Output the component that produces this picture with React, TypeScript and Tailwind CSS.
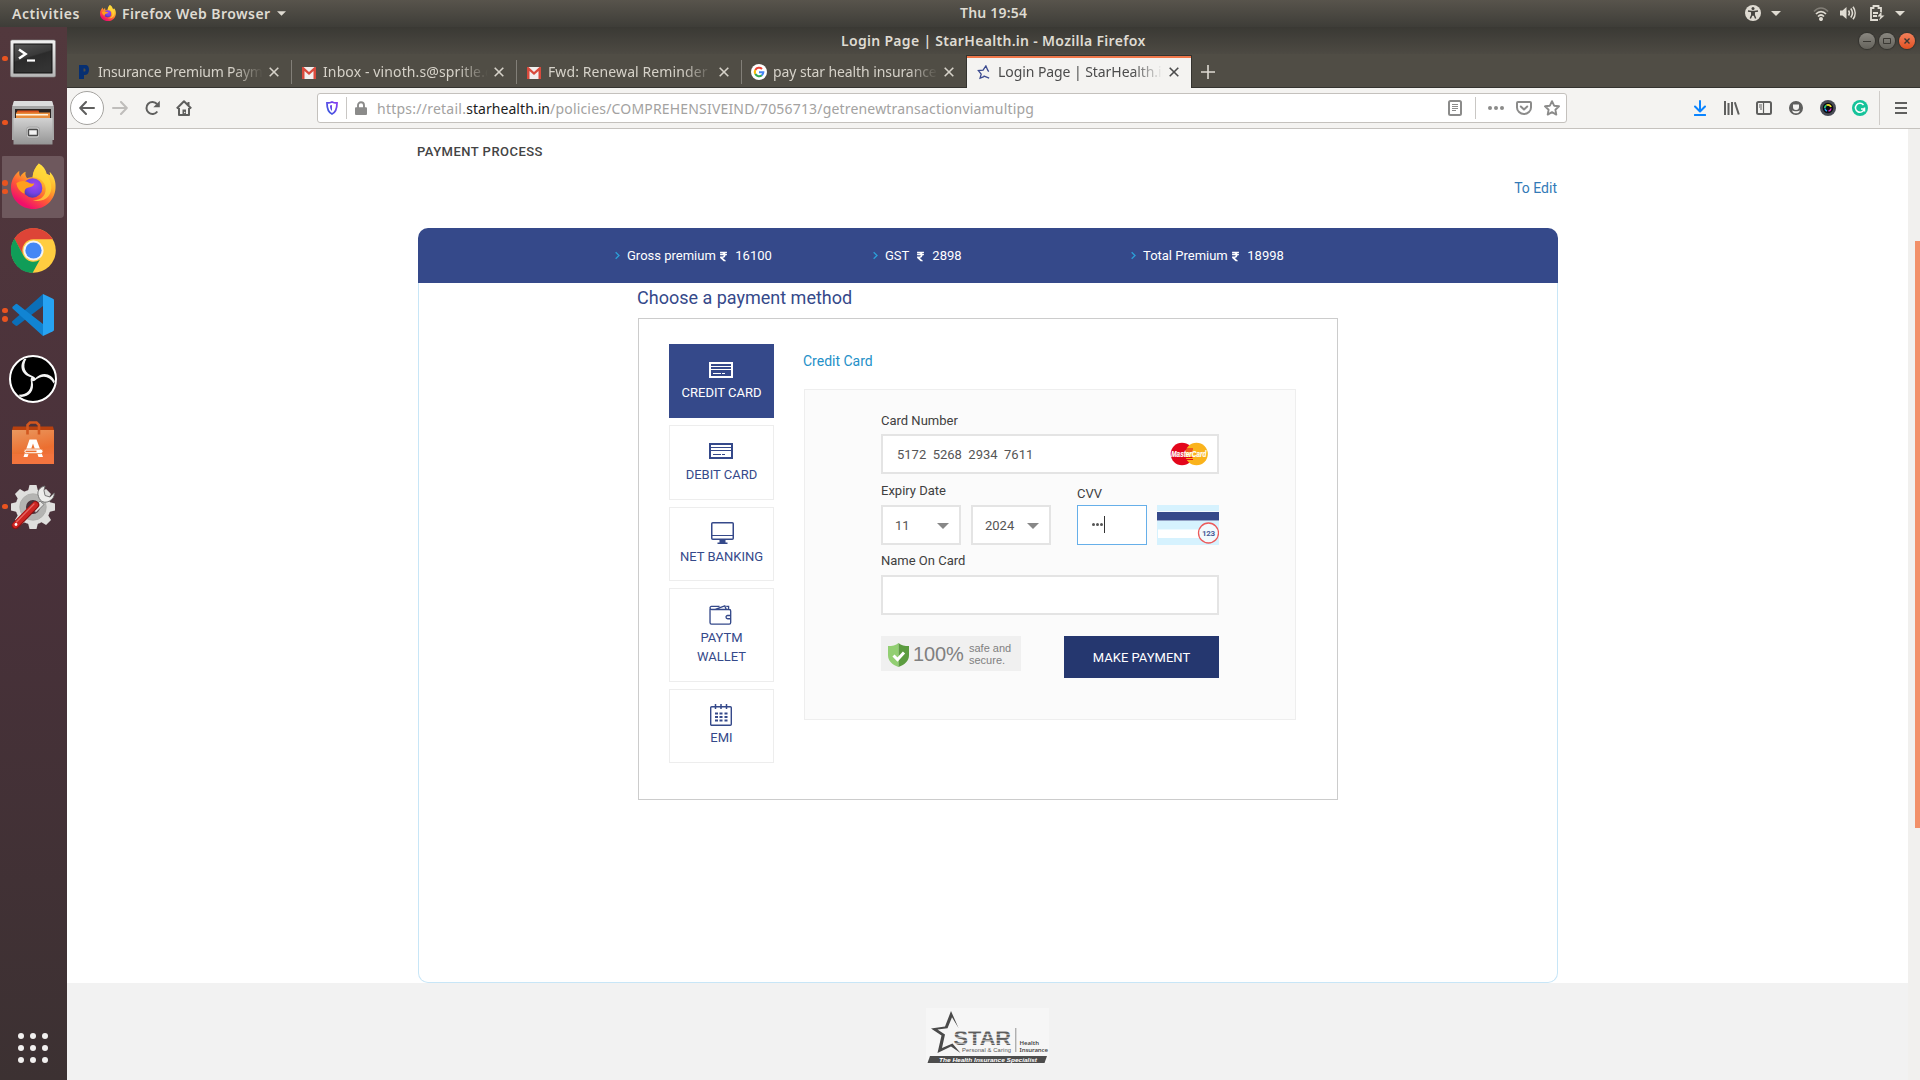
import React from "react";
import { FaRupeeSign } from "react-icons/fa";

const ubuntu = "font-['Noto_Sans',sans-serif]";

/* ---------- Logos ---------- */

function Firefox({ className }: { className: string }) {
  return (
    <svg viewBox="0 0 46 46" className={className}>
      <defs>
        <linearGradient id="ffBody" x1="0.85" y1="0.05" x2="0.25" y2="1">
          <stop offset="0" stopColor="#fff14a" />
          <stop offset="0.35" stopColor="#ffb02a" />
          <stop offset="0.62" stopColor="#ff5a36" />
          <stop offset="0.9" stopColor="#f0106a" />
        </linearGradient>
        <radialGradient id="ffGlobe" cx="0.6" cy="0.35" r="0.7">
          <stop offset="0" stopColor="#a244f0" />
          <stop offset="0.6" stopColor="#7542e5" />
          <stop offset="1" stopColor="#4a3aa8" />
        </radialGradient>
      </defs>
      <path d="M28.500 0c4.500 2.500 7 6 8 10.500l3.500 1.500-.5-3.500C44 13 46 18.500 45.500 25 45 37 35.500 46.500 23 46.500S0 37 0 24.500C0 18 3 12 8.500 7.500c-.3 2.500 0 4.500 1 6 1.200-2.500 3-4 5.500-5-.7 2.500-.2 4.500 1.500 6.500 1.800-.8 3.500-1 5.500-1 .5-6 3-10.500 6.500-14z" fill="url(#ffBody)" />
      <path d="M22 14c5 0 13 3 13.500 12C35.500 34 29 38 22 37.500c12 3.500 21-5 19-16C39.500 14 34 8.500 28.500 0 25 3.500 22.500 8 22 14z" fill="#ffd93a" opacity="0.750" />
      <circle cx="22" cy="25" r="10" fill="url(#ffGlobe)" />
      <path d="M5.500 20c4.500-3 9.500-2.700 13.500.2 1.500.6 3 .5 4.800.3-.8 3-3.800 4-6.800 4.300-2.500.4-3.500 2.700-3 6.200C9 29 6 25 5.500 20z" fill="#ff9f1c" />
    </svg>
  );
}

function Terminal() {
  return (
    <svg viewBox="0 0 46 40" className="h-[40px] w-[46px]">
      <defs>
        <linearGradient id="tmFrame" x1="0" y1="0" x2="0" y2="1">
          <stop offset="0" stopColor="#f2f2f2" />
          <stop offset="1" stopColor="#b5b5b5" />
        </linearGradient>
        <linearGradient id="tmScreen" x1="0" y1="0" x2="0.4" y2="1">
          <stop offset="0" stopColor="#555" />
          <stop offset="0.5" stopColor="#3a3a3a" />
          <stop offset="0.55" stopColor="#2b2b2b" />
          <stop offset="1" stopColor="#333" />
        </linearGradient>
      </defs>
      <rect x="0.500" y="1" width="45" height="37" rx="1.500" fill="url(#tmFrame)" stroke="#8a8a8a" strokeWidth="0.600" />
      <rect x="4" y="5" width="38" height="29" fill="url(#tmScreen)" stroke="#111" />
      <path d="M9 10.500l6.500 4.500L9 19.500" fill="none" stroke="#fff" strokeWidth="2.600" />
      <path d="M17 21.500h8" stroke="#fff" strokeWidth="2.200" />
    </svg>
  );
}

function Files() {
  return (
    <svg viewBox="0 0 42 44" className="h-[44px] w-[42px]">
      <defs>
        <linearGradient id="flFront" x1="0" y1="0" x2="0" y2="1">
          <stop offset="0" stopColor="#d2d2d2" />
          <stop offset="1" stopColor="#959595" />
        </linearGradient>
      </defs>
      <path d="M2 0h38l2 6v33H0V6z" fill="#a6a6a6" />
      <path d="M2 0h38l1.500 5H.5z" fill="#dcdcdc" />
      <rect x="3" y="8" width="36" height="10" fill="#2b2422" />
      <rect x="5" y="9.500" width="22" height="8" rx="1" fill="#d9541e" />
      <rect x="4" y="11.500" width="34" height="6" fill="#e98d3c" />
      <rect x="4" y="13" width="32" height="1.500" fill="#fff3df" />
      <path d="M1.500 17h39v26.500h-39z" fill="url(#flFront)" />
      <rect x="14.500" y="26" width="13" height="11" rx="2.500" fill="#c9c9c9" stroke="#9a9a9a" strokeWidth="0.700" />
      <rect x="16.500" y="28.500" width="9" height="6" rx="0.800" fill="#f2f2f2" stroke="#4a4a4a" strokeWidth="1.400" />
    </svg>
  );
}

function Chrome() {
  return (
    <svg viewBox="0 0 46 46" className="h-[45px] w-[45px]">
      <circle cx="23" cy="23" r="22.800" fill="#ffcd40" />
      <path d="M3.300 11A23 23 0 0 1 42.700 11.500H23a11.500 11.500 0 0 0-10.500 16z" fill="#dd4437" />
      <path d="M3.500 10.700L13 28.500A11.500 11.500 0 0 0 29.500 32.500L22 46A23 23 0 0 1 3.500 10.700z" fill="#109d58" />
      <circle cx="23" cy="23" r="10.300" fill="#f4f4f4" />
      <circle cx="23" cy="23" r="8.300" fill="#4387f5" />
    </svg>
  );
}

function VSCode() {
  return (
    <svg viewBox="0 0 42 42" className="h-[42px] w-[42px]">
      <path d="M0 27.500L31 0v12L5.500 31.500a1.500 1.500 0 0 1-2 0L.3 29z" fill="#0b6fb8" />
      <path d="M.3 13L3.500 10.300a1.500 1.500 0 0 1 2 0L31 30v12L.5 14.500z" fill="#1184d3" />
      <path d="M31 0l9.500 4.500c1 .5 1.500 1 1.500 2v29c0 1-.5 1.500-1.500 2L31 42z" fill="#27a3f2" />
    </svg>
  );
}

const BLADE = "M15 4C10.500 10 11.500 19.500 22.500 22.500l2.500-.7C15.500 18.500 13 11.500 17.500 3.800z";

function Obs() {
  return (
    <svg viewBox="0 0 48 48" className="h-[48px] w-[48px]">
      <circle cx="24" cy="24" r="23" fill="#000" stroke="#fff" strokeWidth="2" />
      <g fill="#f4f4f4">
        <path d={BLADE} />
        <path d={BLADE} transform="rotate(120 24 24)" />
        <path d={BLADE} transform="rotate(240 24 24)" />
        <circle cx="24" cy="24" r="2.300" />
      </g>
    </svg>
  );
}

function Software() {
  return (
    <svg viewBox="0 0 42 43" className="h-[43px] w-[42px]">
      <defs>
        <linearGradient id="swBag" x1="0" y1="0" x2="0.300" y2="1">
          <stop offset="0" stopColor="#e9985f" />
          <stop offset="0.700" stopColor="#ec6f30" />
          <stop offset="1" stopColor="#f27240" />
        </linearGradient>
      </defs>
      <path d="M1 5.500h40l1 4H0z" fill="#b8410f" />
      <path d="M0 9h42v34H0z" fill="url(#swBag)" />
      <path d="M0 33h42v10H0z" fill="#f4763f" opacity="0.600" />
      <path d="M15.500 13.500V4l2.500-2.500h6.500L27 4v9.500" fill="none" stroke="#d2571f" strokeWidth="2.600" />
      <path d="M17.500 18.500h7L31 36h-4.500l-1-3h-9l-1 3H11.500zM19.300 27.500h3.400l-1.700-5z" fill="#fff" />
      <rect x="12" y="28" width="19" height="4.600" rx="2.300" fill="#fff" stroke="#ec7a3c" strokeWidth="0.900" />
      <rect x="13.500" y="29.600" width="11" height="1.600" fill="#ec6f30" />
    </svg>
  );
}

const TEETH = [0, 45, 90, 135, 180, 225, 270, 315];

function Tools() {
  return (
    <svg viewBox="0 0 44 44" className="h-[44px] w-[44px]">
      <g fill="#dfdfdd">
        {TEETH.map((a) => (
          <path key={a} d="M18.500 0h7l2 8h-11z" transform={`rotate(${a} 22 22)`} />
        ))}
        <path fillRule="evenodd" d="M22 4.500a17.500 17.500 0 1 0 0 35 17.500 17.500 0 0 0 0-35zm0 9.500a8 8 0 1 1 0 16 8 8 0 0 1 0-16z" />
      </g>
      <circle cx="22" cy="22" r="10" fill="none" stroke="#b4b4b2" strokeWidth="6" />
      <circle cx="22" cy="22" r="13.300" fill="none" stroke="#a0a09e" strokeWidth="0.700" />
      <path d="M21 24l8-8 4 3.500-8 8z" fill="#e4e4e2" stroke="#6b6b6b" strokeWidth="0.800" />
      <path d="M34 1c-5.500 1-8.500 5.500-6.500 10.500C29 17 34 18.500 38.500 16c3-1.700 5-4.500 4.800-8L39 12l-5-1.500-1-5z" fill="#ededeb" stroke="#6b6b6b" strokeWidth="0.900" />
      <path d="M4.500 40.500L24.500 20" stroke="#8c1212" strokeWidth="7.500" strokeLinecap="round" />
      <path d="M4.500 40L24 20" stroke="#cd2522" strokeWidth="6" strokeLinecap="round" />
      <path d="M5.500 37L23 19" stroke="#e46a66" strokeWidth="1.200" strokeLinecap="round" />
      <circle cx="5" cy="39.500" r="1.400" fill="#fff" />
    </svg>
  );
}

/* ---------- Desktop panel ---------- */

function Caret({ className }: { className: string }) {
  return (
    <svg viewBox="0 0 10 5" className={className}>
      <path d="M0 0h10L5 5z" fill="currentColor" />
    </svg>
  );
}

function TopBar() {
  return (
    <header className={`${ubuntu} grid h-[27px] grid-cols-[960px_1fr] bg-linear-to-b from-[#58544c] to-[#3e3d38] text-[14px] font-semibold leading-[27px] text-[#dfdbd2]`}>
      <div className="flex items-center pl-[12px]">
        <span className="w-[88px] tracking-[0.55px]">Activities</span>
        <Firefox className="-mt-[2px] h-[16px] w-[16px]" />
        <span className="ml-[6px] tracking-[0.43px]">Firefox Web Browser</span>
        <Caret className="ml-[6px] h-[5px] w-[9px]" />
      </div>
      <div className="flex items-center">
        <span className="-mt-[2px] grow tracking-[0.2px]">Thu 19:54</span>
        <svg viewBox="0 0 16 16" className="-mt-px h-[16px] w-[16px]">
          <circle cx="8" cy="8" r="8" fill="currentColor" />
          <circle cx="8" cy="3.600" r="1.500" fill="#45433e" />
          <path d="M3 6l3.500.6h3L13 6M6.800 7h2.400v3H6.800zM7 9.500L5.300 13.500M9 9.500l1.700 4" fill="#45433e" stroke="#45433e" strokeWidth="1.500" />
        </svg>
        <Caret className="ml-[10px] h-[5px] w-[10px]" />
        <svg viewBox="0 0 16 14" className="ml-[32px] h-[14px] w-[16px]" fill="none" stroke="currentColor" strokeWidth="1.700">
          <path d="M1 4.500C5-.2 11-.2 15 4.500" opacity="0.350" />
          <path d="M3 7c3-3.300 7-3.300 10 0M5 9.500c2-2 4-2 6 0" />
          <circle cx="8" cy="12" r="1.200" fill="currentColor" />
        </svg>
        <svg viewBox="0 0 16 14" className="-mt-px ml-[11px] h-[14px] w-[16px]" fill="none" stroke="currentColor" strokeWidth="1.600">
          <path d="M0 4.500h2.500L6.500 1v12L2.500 9.500H0z" fill="currentColor" stroke="none" />
          <path d="M8.500 4.500c1 1.500 1 3.500 0 5M10.800 2.500c2 2.700 2 6.300 0 9M13 .8c2.800 3.700 2.800 8.700 0 12.400" />
        </svg>
        <svg viewBox="0 0 15 16" className="-mt-px ml-[14px] h-[16px] w-[15px]" fill="none" stroke="currentColor" strokeWidth="1.800">
          <path d="M8 15H1V3h2.500V1h5v2H11v4M3 8h5M3 11h4" />
          <path d="M11.500 6.500L7.500 11.500h3L9 15.500l5.500-5h-3z" fill="currentColor" stroke="none" />
        </svg>
        <Caret className="ml-[10px] mr-[15px] h-[5px] w-[10px]" />
      </div>
    </header>
  );
}

function Dots({ count }: { count: number }) {
  return (
    <span className="flex w-[9px] flex-col items-start gap-[3px] pl-[2px]">
      {Array.from({ length: count }, (_, i) => (
        <i key={i} className="h-[5.500px] w-[5.500px] rounded-full bg-[#e95420]" />
      ))}
    </span>
  );
}

function Launcher() {
  const apps = [
    { dots: 1, icon: <Terminal /> },
    { dots: 1, icon: <Files /> },
    { dots: 2, icon: <Firefox className="-mt-[2px] h-[46px] w-[45px]" />, active: true },
    { dots: 0, icon: <Chrome /> },
    { dots: 2, icon: <VSCode /> },
    { dots: 0, icon: <Obs /> },
    { dots: 0, icon: <Software /> },
    { dots: 1, icon: <Tools /> },
  ];
  return (
    <aside className="flex w-[67px] shrink-0 flex-col bg-linear-to-b from-[#52383d] via-[#49313a] to-[#3c3132]">
      {apps.map((a, i) => (
        <div key={i} className="flex h-[64px] items-center">
          <div className={a.active ? "flex h-[62px] w-[64px] items-center rounded-[4px] bg-[linear-gradient(#6e585d,#6e585d)] bg-[position:2px_0] bg-no-repeat" : "-mt-px flex h-[62px] w-[64px] items-center"}>
            <Dots count={a.dots} />
            <span className="flex w-[48px] justify-center">{a.icon}</span>
          </div>
        </div>
      ))}
      <div className="mt-auto mb-[17px] ml-[18px] grid w-[30px] grid-cols-3 gap-[6px]">
        {Array.from({ length: 9 }, (_, i) => (
          <i key={i} className="h-[6px] w-[6px] rounded-full bg-[#f2f0ef]" />
        ))}
      </div>
    </aside>
  );
}

/* ---------- Browser chrome ---------- */

function Gmail() {
  return (
    <svg viewBox="0 0 14 12" className="mt-px h-[12px] w-[14px]">
      <path d="M0 0h14v12H0z" fill="#f1efee" />
      <path d="M0 12V0h1.500L7 5l5.500-5H14v12h-2.500V4L7 8 2.500 4v8z" fill="#d84a3c" />
    </svg>
  );
}

function Google() {
  return (
    <svg viewBox="0 0 16 16" className="h-[16px] w-[16px]">
      <circle cx="8" cy="8" r="8" fill="#fff" />
      <g fill="none" strokeWidth="2.100">
        <path d="M4.300 5.900A4.300 4.300 0 0 1 11 4.900" stroke="#ea4335" />
        <path d="M4.300 10.100A4.300 4.300 0 0 1 4.300 5.900" stroke="#fbbc05" />
        <path d="M10.900 11.200A4.300 4.300 0 0 1 4.300 10.100" stroke="#34a853" />
        <path d="M8 8.200h4.300a4.300 4.300 0 0 1-1.500 3.100" stroke="#4285f4" />
      </g>
    </svg>
  );
}

function StarIcon() {
  return (
    <svg viewBox="0 0 14 16" className="h-[15px] w-[14px]" fill="none" stroke="#3b4a8f" strokeWidth="1.400">
      <path d="M11 5.500L9 1 6 5.500 1 6l3 3.800L2.800 14l4.200-1.500M11 5.500L12 7M6.500 11.500l6 2.500" />
    </svg>
  );
}

function Close() {
  return (
    <svg viewBox="0 0 10 10" className="h-[10px] w-[10px] shrink-0">
      <path d="M.7.700l8.600 8.600M9.300.700L.7 9.300" stroke="currentColor" strokeWidth="1.600" />
    </svg>
  );
}

function Tab({ icon, title, spacing, active, divider }: { icon: React.ReactNode; title: string; spacing: string; active?: boolean; divider?: boolean }) {
  return (
    <div
      className={
        active
          ? "-ml-px flex h-[33px] w-[226px] items-center border-x border-t border-x-[#34332f] border-t-[#34332f] bg-[#f4f3f1] pl-[8px] text-[#4c4c4c] shadow-[inset_0_2px_0_#f0774a]"
          : "flex h-[32px] w-[225px] items-center pl-[8px] text-[#d6d2c9]"
      }
    >
      <span className="flex w-[18px] justify-center">{icon}</span>
      <span className={`ml-[5px] h-[26px] w-[165px] overflow-hidden whitespace-nowrap [mask-image:linear-gradient(to_right,#000_135px,transparent_165px)] ${spacing}`}>{title}</span>
      <span className="ml-[6px] flex grow items-center"><Close /></span>
      {divider && <i className="h-[24px] w-px bg-[#827f78]" />}
    </div>
  );
}

function WindowButton({ kind }: { kind: "min" | "max" | "close" }) {
  return (
    <span
      className={
        kind === "close"
          ? "flex h-[16px] w-[16px] items-center justify-center rounded-full bg-linear-to-b from-[#f2805a] to-[#e2501f] shadow-[0_0_1px_1px_#33322e]"
          : "flex h-[16px] w-[16px] items-center justify-center rounded-full bg-linear-to-b from-[#8a8881] to-[#65635c] shadow-[0_0_1px_1px_#33322e]"
      }
    >
      <svg viewBox="0 0 8 8" className="h-[8px] w-[8px]" fill="none" stroke="#3a3833" strokeWidth="1">
        {kind === "min" && <path d="M0 4.500h8" />}
        {kind === "max" && <path d="M.5 1.500h7v5h-7z" />}
        {kind === "close" && <path d="M1.500 1.500l5 5M6.500 1.500l-5 5" strokeWidth="1.400" />}
      </svg>
    </span>
  );
}

function TitleBar() {
  return (
    <div className="flex h-[27px] items-center bg-linear-to-b from-[#3a3934] to-[#4d4a43] text-[14px] font-semibold text-[#dfdbd2]">
      <span className="w-[774px]" />
      <span className="grow whitespace-nowrap tracking-[0.31px]">Login Page | StarHealth.in - Mozilla Firefox</span>
      <div className="mr-[5px] flex gap-[4px]">
        <WindowButton kind="min" />
        <WindowButton kind="max" />
        <WindowButton kind="close" />
      </div>
    </div>
  );
}

function TabStrip() {
  return (
    <div className="flex h-[34px] items-end bg-[#504d45] text-[14px] leading-[26px] shadow-[inset_0_-1px_0_#34332f]">
      <Tab
        icon={<svg viewBox="0 0 10 14" className="h-[14px] w-[10px]"><path d="M0 0h6c3 0 4 2 4 4.500S9 10 6 10H5v4H0zM4.500 3.500v3h1c.8 0 1-.5 1-1.500s-.3-1.500-1-1.500z" fill="#062f72" fillRule="evenodd" /></svg>}
        title="Insurance Premium Payment" spacing="tracking-[-0.22px]" divider
      />
      <Tab icon={<Gmail />} title="Inbox - vinoth.s@spritle.com" spacing="tracking-[0.12px]" divider />
      <Tab icon={<Gmail />} title="Fwd: Renewal Reminder -" spacing="tracking-[0.1px]" divider />
      <Tab icon={<Google />} title="pay star health insurance" spacing="tracking-[-0.09px]" />
      <Tab icon={<StarIcon />} title="Login Page | StarHealth.in" spacing="tracking-[-0.07px]" active />
      <svg viewBox="0 0 14 14" className="mb-[9px] ml-[9px] h-[14px] w-[14px]">
        <path d="M7 0v14M0 7h14" stroke="#dedad2" strokeWidth="1.600" />
      </svg>
    </div>
  );
}

function NavBar() {
  return (
    <div className="flex h-[41px] items-center border-b border-[#c5c2be] bg-[#f4f3f1] text-[#5f5f5e]">
      <div className="ml-[3px] flex h-[34px] w-[34px] items-center justify-center rounded-full border border-[#a5a3a0] bg-white">
        <svg viewBox="0 0 16 14" className="h-[14px] w-[16px]" fill="none" stroke="currentColor" strokeWidth="2" strokeLinecap="round" strokeLinejoin="round">
          <path d="M15 7H1.500M7 1L1.200 7 7 13" />
        </svg>
      </div>
      <svg viewBox="0 0 16 14" className="ml-[8px] h-[14px] w-[16px]" fill="none" stroke="#bfbdbb" strokeWidth="2" strokeLinecap="round" strokeLinejoin="round">
        <path d="M1 7h13.500M9 1l5.800 6L9 13" />
      </svg>
      <svg viewBox="0 0 16 16" className="ml-[16px] h-[16px] w-[16px]" fill="none" stroke="currentColor" strokeWidth="2">
        <path d="M13 4A6 6 0 1 0 13.300 11.500" />
        <path d="M15.800.800v6.500H9.300z" fill="currentColor" stroke="none" />
      </svg>
      <svg viewBox="0 0 16 16" className="ml-[16px] h-[16px] w-[16px]" fill="none" stroke="currentColor" strokeWidth="2" strokeLinejoin="round">
        <path d="M.8 8.500L8 1.300l7.200 7.200M3 8v7h10V8M12.500 2v3" />
        <path d="M6.500 15V9.500h3.500V15z" fill="currentColor" stroke="none" />
        <circle cx="8.700" cy="12.500" r="0.700" fill="#f4f3f1" stroke="none" />
      </svg>
      <div className="ml-[125px] flex h-[30px] w-[1250px] items-center rounded-[3px] border border-[#c4c1bd] bg-white text-[14px] leading-[28px] text-[#8b8b8a]">
        <svg viewBox="0 0 12 14" className="ml-[8px] h-[14px] w-[12px]">
          <defs>
            <linearGradient id="shield" x1="0" y1="1" x2="1" y2="0">
              <stop offset="0" stopColor="#2f5bdc" />
              <stop offset="1" stopColor="#8a3df0" />
            </linearGradient>
          </defs>
          <path d="M6 1c1.500.9 3.200 1 5 1 0 5-.6 9-5 11C1.600 11 1 7 1 2c1.800 0 3.500-.1 5-1z" fill="none" stroke="url(#shield)" strokeWidth="1.800" />
          <path d="M6 4v6C4.500 9 4 7 4 4.500z" fill="url(#shield)" />
        </svg>
        <i className="ml-[8px] h-[22px] w-px bg-[#c9c7c4]" />
        <svg viewBox="0 0 12 14" className="ml-[8px] h-[14px] w-[12px]">
          <path d="M3 7V4.300a3 3 0 0 1 6 0V7" fill="none" stroke="currentColor" strokeWidth="1.900" />
          <rect y="6.300" width="12" height="7.700" rx="1" fill="currentColor" />
        </svg>
        <span className="ml-[10px] mt-px grow whitespace-nowrap tracking-[0.18px] text-[#a3a2a1]">
          <span className="tracking-[0.24px]">https://retail.</span>
          <span className="tracking-[0.06px] text-[#1c1c1c]">starhealth.in</span>
          /policies/COMPREHENSIVEIND/7056713/getrenewtransactionviamultipg
        </span>
        <svg viewBox="0 0 14 16" className="h-[16px] w-[14px]" fill="none" stroke="currentColor">
          <rect x="1" y="1" width="12" height="14" rx="1.500" strokeWidth="2" />
          <path d="M4 4.500h6M4 6.500h6M4 8.500h6M4 10.500h4" />
        </svg>
        <i className="ml-[13px] h-[22px] w-px bg-[#c9c7c4]" />
        <svg viewBox="0 0 16 4" className="ml-[12px] h-[4px] w-[16px]" fill="currentColor">
          <circle cx="2" cy="2" r="2" /><circle cx="8" cy="2" r="2" /><circle cx="14" cy="2" r="2" />
        </svg>
        <svg viewBox="0 0 16 14" className="ml-[12px] h-[14px] w-[16px]" fill="none" stroke="currentColor" strokeWidth="2" strokeLinecap="round" strokeLinejoin="round">
          <path d="M2 1h12c.6 0 1 .4 1 1v4.500a7 6.500 0 0 1-14 0V2c0-.6.400-1 1-1zM4.800 5.500L8 8.500l3.200-3" />
        </svg>
        <svg viewBox="0 0 16 16" className="ml-[12px] mr-[6px] h-[16px] w-[16px]" fill="none" stroke="currentColor" strokeWidth="1.900" strokeLinejoin="round">
          <path d="M8 1.200l2.100 4.500 4.900.6-3.600 3.400.9 4.900L8 12.200l-4.300 2.400.9-4.900L1 6.300l4.900-.6z" />
        </svg>
      </div>
      <div className="ml-[127px] flex items-center gap-[16px]">
        <svg viewBox="0 0 12 16" className="mr-[2px] h-[16px] w-[12px]" fill="none" stroke="#0a84ff" strokeWidth="2" strokeLinecap="round" strokeLinejoin="round">
          <path d="M6 1v10M1 6.500l5 5 5-5M.8 15h10.400" />
        </svg>
        <svg viewBox="0 0 16 14" className="h-[14px] w-[16px]" fill="none" stroke="currentColor" strokeWidth="2">
          <path d="M1 0v14M4.500 2v12M8 1v13M10.800 1.200l4 12.300" />
        </svg>
        <svg viewBox="0 0 16 14" className="h-[14px] w-[16px]" fill="none" stroke="currentColor" strokeWidth="2">
          <rect x="1" y="1" width="14" height="12" rx="1.500" />
          <path d="M7.500 1v12M3 4h3M3 6h3M4 8h2" strokeWidth="1.200" />
        </svg>
        <svg viewBox="0 0 16 16" className="h-[16px] w-[16px]" fill="none" stroke="currentColor" strokeWidth="2">
          <circle cx="8" cy="8" r="6.200" fill="currentColor" strokeWidth="1.600" />
          <path d="M5 4.500h6v2.500a3 3 0 0 1-6 0z" fill="#f4f3f1" stroke="none" />
          <path d="M4 10.300c2 1.300 6 1.300 8 0-.5 2.500-2.300 3-4 3s-3.500-.5-4-3z" fill="#f4f3f1" stroke="none" />
        </svg>
        <svg viewBox="0 0 16 16" className="h-[16px] w-[16px]" fill="none">
          <circle cx="8" cy="8" r="8" fill="#484b55" />
          <circle cx="8" cy="8" r="5.300" fill="#0b0b10" />
          <path d="M4.800 8A3.200 3.200 0 0 1 6.500 5.200" stroke="#21d07a" strokeWidth="1.800" />
          <path d="M6.500 5.200A3.200 3.200 0 0 1 11 7" stroke="#f0e02a" strokeWidth="1.800" />
          <path d="M5 8.500a3 3 0 0 0 2 2.500" stroke="#22a5ff" strokeWidth="1.500" />
          <path d="M11 8.500a3 3 0 0 1-2.500 2.500" stroke="#e02ac0" strokeWidth="1.500" />
        </svg>
        <svg viewBox="0 0 16 16" className="h-[16px] w-[16px]" fill="none" stroke="#fff" strokeWidth="1.500">
          <circle cx="8" cy="8" r="8" fill="#15c39a" stroke="none" />
          <path d="M11.500 5A4.500 4.500 0 1 0 12.300 9H9M12.500 7.500v4" />
        </svg>
      </div>
      <i className="ml-[11px] h-[34px] w-px bg-[#cfccc9]" />
      <svg viewBox="0 0 12 12" className="ml-[15px] h-[12px] w-[12px]" stroke="currentColor" strokeWidth="2">
        <path d="M0 1h12M0 6h12M0 11h12" />
      </svg>
    </div>
  );
}

/* ---------- Payment page ---------- */

function Premium({ label, value, width, gap }: { label: string; value: string; width: string; gap: string }) {
  return (
    <div className={`flex items-center ${width}`}>
      <svg viewBox="0 0 6 9" className="mr-[7px] h-[9px] w-[5px]" fill="none" stroke="#2c9ed6" strokeWidth="1.600">
        <path d="M.8.500l4 4-4 4" />
      </svg>
      {label}
      <FaRupeeSign className={`mt-[2px] h-[11px] w-[7px] ${gap}`} />
      <span className="ml-[8px]">{value}</span>
    </div>
  );
}

function CardIcon() {
  return (
    <svg viewBox="0 0 24 16" className="mr-px h-[16px] w-[24px] self-center" stroke="currentColor" fill="none">
      <rect x="1" y="1" width="22" height="14" strokeWidth="2" />
      <path d="M2 4.500h20M2 7.500h20M4 11.500h8M13 11.500h3" />
    </svg>
  );
}

function MonitorIcon() {
  return (
    <svg viewBox="0 0 23 22" className="ml-[2px] h-[22px] w-[23px]" stroke="currentColor" fill="none">
      <rect x="0.750" y="0.750" width="21.500" height="16.500" rx="1" strokeWidth="1.500" />
      <path d="M1 13.500h21" strokeWidth="1" />
      <path d="M8.500 17.500h6v3h2V22h-10v-1.500h2z" fill="currentColor" stroke="none" />
    </svg>
  );
}

function WalletIcon() {
  return (
    <svg viewBox="0 0 24 21" className="mr-[2px] h-[20px] w-[23px]" stroke="currentColor" fill="none" strokeWidth="1.400">
      <path d="M1 4v14.500c0 1 .6 1.600 1.500 1.600h18.700c.9 0 1.500-.6 1.500-1.600V6.200c0-1-.6-1.500-1.500-1.500H2.500C1.600 4.700 1 3.800 1 3s.6-1.500 1.500-1.500H11M6.500 4.500l10-3.500 1.500 3.500M18 1.500h2.500v3M22.500 11h-3a1.700 1.700 0 0 0 0 3.400h3" />
    </svg>
  );
}

function CalendarIcon() {
  return (
    <svg viewBox="0 0 22 22" className="mr-px h-[22px] w-[22px]" stroke="currentColor" fill="none">
      <rect x="0.700" y="2.700" width="20.600" height="18.600" rx="1" strokeWidth="1.400" />
      <path d="M5.500 0v5M11 0v5M16.500 0v5" strokeWidth="1.500" />
      <path d="M5 9.500h3M9.500 9.500h3M14.500 9.500h3M5 13h3M9.500 13h3M14.500 13h3M5 16.500h3M9.500 16.500h3M14.500 16.500h3" strokeWidth="2" />
    </svg>
  );
}

function Method({ icon, label, active, size, pad, gap }: { icon: React.ReactNode; label: string; active?: boolean; size: string; pad: string; gap: string }) {
  return (
    <div className={`flex w-[105px] flex-col items-center text-center leading-[19px] ${size} ${pad} ${gap} ${active ? "bg-[#35498a] text-white" : "border border-[#ededed] bg-white text-[#35498a]"}`}>
      {icon}
      <span className="w-[84px]">{label}</span>
    </div>
  );
}

function Select({ value }: { value: string }) {
  return (
    <div className="flex h-[40px] w-[80px] items-center border-2 border-[#e4e4e4] bg-white pl-[12px]">
      <span className="mt-px w-[42px]">{value}</span>
      <svg viewBox="0 0 12 6" className="mt-px h-[6px] w-[12px]">
        <path d="M0 0h12L6 6z" fill="#888" />
      </svg>
    </div>
  );
}

function MasterCard() {
  return (
    <svg viewBox="0 0 38 24" className="h-[24px] w-[38px]">
      <circle cx="12" cy="12" r="11.300" fill="#e3061b" />
      <circle cx="26.500" cy="12" r="11.300" fill="#fab31c" />
      <path d="M15 7h8M14.500 9h8M14.500 15.500h8M15 17.500h8" stroke="#e3061b" strokeWidth="1" />
      <text x="18.800" y="15.200" textAnchor="middle" fontFamily="Liberation Sans, sans-serif" fontSize="8.800" fontWeight="bold" fontStyle="italic" fill="#fff" stroke="#fff" strokeWidth="0.200" textLength="35" lengthAdjust="spacingAndGlyphs">MasterCard</text>
    </svg>
  );
}

function CardForm() {
  return (
    <div className="flex h-[331px] w-[492px] flex-col border border-[#eeeeee] bg-[#fbfbfb] px-[76px] text-[#404040]">
      <span className="mt-[21px] h-[23px] leading-[20px]">Card Number</span>
      <div className="flex h-[40px] w-[338px] items-center justify-between border-2 border-[#e4e4e4] bg-white pl-[14px] pr-[9px] text-[#555]">
        <span className="mt-px whitespace-pre">5172  5268  2934  7611</span>
        <MasterCard />
      </div>
      <div className="flex h-[71px]">
        <div className="flex w-[196px] flex-col">
          <span className="mt-[7px] mb-[4px] h-[20px] leading-[20px]">Expiry Date</span>
          <div className="flex gap-[10px] text-[#555]">
            <Select value="11" />
            <Select value="2024" />
          </div>
        </div>
        <div className="flex w-[80px] flex-col">
          <span className="mt-[10px] mb-[1px] h-[20px] leading-[20px]">CVV</span>
          <div className="flex h-[40px] w-[70px] items-center gap-px border border-[#66afe9] bg-white pl-[14px]">
            <i className="-mt-px h-[3px] w-[3px] rounded-full bg-[#555]" />
            <i className="-mt-px h-[3px] w-[3px] rounded-full bg-[#555]" />
            <i className="-mt-px h-[3px] w-[3px] rounded-full bg-[#555]" />
            <i className="-mt-[2px] h-[17px] w-px bg-[#333]" />
          </div>
        </div>
        <svg viewBox="0 0 62 40" className="mt-[31px] h-[40px] w-[62px] shrink-0">
          <path d="M0 0h62v40H0z" fill="#d6f2fe" />
          <path d="M0 6h62v10H0z" fill="#fff" opacity="0.700" />
          <path d="M0 7h62v8.500H0z" fill="#35498a" />
          <path d="M1 24.500h44v8.500H1z" fill="#fff" />
          <circle cx="51.500" cy="28" r="10" fill="#f2fafe" stroke="#ec5a5a" strokeWidth="1.300" />
          <text x="51.500" y="31" textAnchor="middle" fontFamily="Roboto, sans-serif" fontSize="8" fontWeight="700" fill="#4a5c96" textLength="13">123</text>
        </svg>
      </div>
      <span className="mt-[6px] h-[24px] leading-[20px]">Name On Card</span>
      <div className="h-[40px] w-[338px] border-2 border-[#e4e4e4] bg-white" />
      <div className="mt-[21px] flex items-start justify-between">
        <div className="flex h-[35px] w-[140px] items-center bg-[#f0f0f0] pl-[7px] font-['Liberation_Sans',sans-serif] text-[#808080]">
          <svg viewBox="0 0 21 24" className="mt-[3px] h-[24px] w-[21px]">
            <path d="M10.500 0C8 2.500 4 3 0 3v9c0 6 4 9.500 10.500 12z" fill="#92cf72" />
            <path d="M10.500 0C13 2.500 17 3 21 3v9c0 6-4 9.500-10.500 12z" fill="#5c9c40" />
            <path d="M5.500 12.500l4 4 6.500-7" fill="none" stroke="#fff" strokeWidth="3" />
          </svg>
          <span className="mt-[2px] ml-[4px] w-[56px] text-[20px] leading-[33px] tracking-[-0.1px]">100%</span>
          <span className="text-[11px] leading-[12px]">safe and<br />secure.</span>
        </div>
        <button className="h-[42px] w-[155px] bg-[#25376f] pt-[2px] text-[13px] text-white">MAKE PAYMENT</button>
      </div>
    </div>
  );
}

function StarLogo() {
  return (
    <svg viewBox="0 0 123 55" className="h-[55px] w-[123px]">
      <defs>
        <pattern id="stripes" width="4" height="3" patternUnits="userSpaceOnUse">
          <rect width="4" height="3" fill="#b0b0b0" />
          <rect width="4" height="1.800" fill="#5c5c5c" />
        </pattern>
      </defs>
      <path d="M0 0h123v55H0z" fill="#f6f6f6" />
      <path d="M32.500 20L25 3l-6 15.500L5 20.500l10.500 7L11.500 45l13.500-6.500L34.500 45l-8-9.500-10.500 4.500 3-13.500-7.500-5 10-1.200 4.500-11z" fill="#4a4a4a" />
      <text x="27.500" y="37" fontFamily="Liberation Sans, sans-serif" fontWeight="bold" fontSize="21" fill="url(#stripes)" textLength="57.500" lengthAdjust="spacingAndGlyphs">STAR</text>
      <text x="36" y="44" fontFamily="Liberation Sans, sans-serif" fontSize="5.800" fill="#555" textLength="49">Personal &amp; Caring</text>
      <path d="M89.800 20v24" stroke="#888" strokeWidth="0.900" />
      <text x="93.500" y="36.500" fontFamily="Noto Sans, sans-serif" fontWeight="600" fontSize="6" fill="#444" textLength="19.500">Health</text>
      <text x="93.500" y="44" fontFamily="Noto Sans, sans-serif" fontWeight="600" fontSize="6" fill="#444" textLength="28.500">Insurance</text>
      <path d="M4 48h117l-2.500 7H1.500z" fill="#4d4d4d" />
      <text x="13" y="53.500" fontFamily="Liberation Sans, sans-serif" fontWeight="bold" fontStyle="italic" fontSize="6.200" fill="#fff" textLength="98" lengthAdjust="spacingAndGlyphs">The Health Insurance Specialist</text>
    </svg>
  );
}

function PaymentPage() {
  return (
    <div className="flex h-[951px] font-['Roboto',sans-serif] text-[13px]">
      <main className="flex w-[1841px] flex-col bg-white">
        <div className="ml-[351px] flex h-[854px] w-[1140px] flex-col">
          <h1 className="-ml-px mt-[13px] h-[20px] font-medium leading-[20px] tracking-[0.48px] text-[#444]">PAYMENT PROCESS</h1>
          <a className="mt-[16px] mr-px h-[20px] self-end text-[14px] leading-[20px] text-[#337ab7]">To Edit</a>
          <section className="mt-[30px] flex h-[755px] flex-col">
            <div className="flex h-[55px] shrink-0 items-center rounded-t-[10px] bg-[#35498a] pl-[197px] text-white">
              <Premium label="Gross premium" value="16100" width="w-[258px]" gap="ml-[4.500px]" />
              <Premium label="GST" value="2898" width="w-[258px]" gap="ml-[8px]" />
              <Premium label="Total Premium" value="18998" width="w-[258px]" gap="ml-[4.500px]" />
            </div>
            <div className="grow rounded-b-[10px] border-x border-b border-[#c8e6f7]">
              <h2 className="ml-[218px] h-[35px] text-[18px] leading-[30px] text-[#35498a]">Choose a payment method</h2>
              <div className="ml-[219px] flex h-[482px] w-[700px] border border-[#cccccc] pl-[30px]">
                <div className="flex w-[135px] flex-col gap-[7px] pt-[25px]">
                  <Method active icon={<CardIcon />} label="CREDIT CARD" size="h-[74px]" pad="pt-[18px]" gap="gap-[5px]" />
                  <Method icon={<CardIcon />} label="DEBIT CARD" size="h-[75px]" pad="pt-[17px]" gap="gap-[6px]" />
                  <Method icon={<MonitorIcon />} label="NET BANKING" size="h-[74px]" pad="pt-[14px]" gap="gap-[3px]" />
                  <Method icon={<WalletIcon />} label="PAYTM WALLET" size="h-[94px]" pad="pt-[16px]" gap="gap-[3px]" />
                  <Method icon={<CalendarIcon />} label="EMI" size="h-[74px]" pad="pt-[14px]" gap="gap-[2px]" />
                </div>
                <div className="flex flex-col">
                  <h3 className="-ml-px mt-[32px] h-[38px] text-[14px] leading-[20px] text-[#2490c8]">Credit Card</h3>
                  <CardForm />
                </div>
              </div>
            </div>
          </section>
        </div>
        <footer className="flex grow justify-center bg-[#f2f2f2] pt-[25px]">
          <StarLogo />
        </footer>
      </main>
      <div className="flex grow justify-end bg-[#f1f0ee]">
        <i className="mt-[112px] h-[587px] w-[5px] bg-[#f29069]" />
      </div>
    </div>
  );
}

export default function App() {
  return (
    <div className="flex h-[1080px] w-[1920px] flex-col overflow-hidden bg-white">
      <TopBar />
      <div className="flex grow">
        <Launcher />
        <div className={`${ubuntu} w-[1853px]`}>
          <TitleBar />
          <TabStrip />
          <NavBar />
          <PaymentPage />
        </div>
      </div>
    </div>
  );
}
